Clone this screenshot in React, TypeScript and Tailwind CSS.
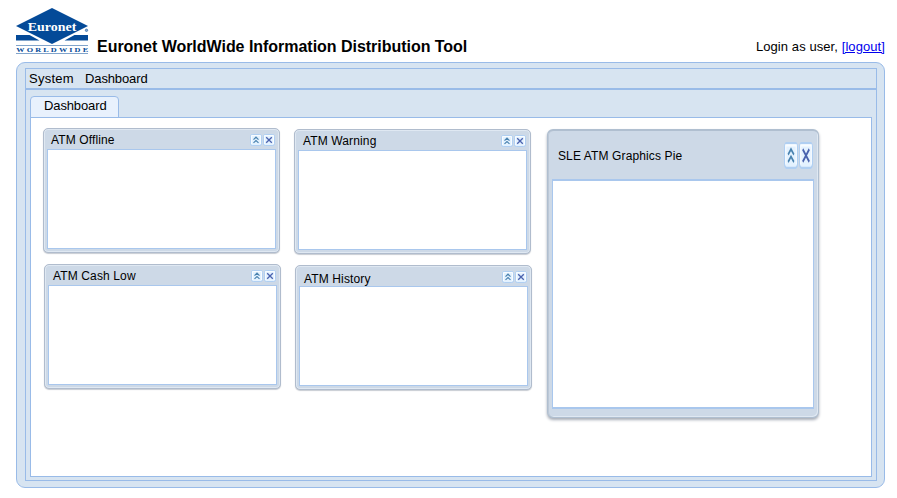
import React from "react";

function Logo() {
  return (
    <svg width="74" height="48" viewBox="0 0 74 48" className="block shrink-0">
      <g fill="#044a98">
        <path d="M0 27H13.500L23.500 32.500H0ZM72 27H58.500L48.500 32.500H72Z" />
        <path d="M36 0L72 18L36 36L0 18Z" />
        <path d="M0 37h72v.9H0Z" opacity=".5" />
        <path d="M0 45h72v.9H0Z" opacity=".5" />
      </g>
      <text x="11.800" y="22.800" fill="#fff" fontFamily="Liberation Serif, serif" fontSize="13.500" fontWeight="bold" textLength="48.500" lengthAdjust="spacingAndGlyphs">Euronet</text>
      <text x="0.300" y="43.900" fill="#044a98" fontFamily="Liberation Serif, serif" fontSize="6.500" fontWeight="bold" letterSpacing="1.700" textLength="74" lengthAdjust="spacingAndGlyphs">WORLDWIDE</text>
      <circle cx="70.500" cy="22.300" r="1.200" fill="#8aabd0" stroke="#3f73ae" strokeWidth=".8" />
    </svg>
  );
}

function Tool({ close = false, large = false }: { close?: boolean; large?: boolean }) {
  return (
    <svg
      width={large ? 14 : 12}
      height={large ? 27 : 12}
      viewBox="0 0 12 12"
      preserveAspectRatio="none"
      className="block shrink-0"
    >
      <rect x=".5" y=".5" width="11" height="11" rx="1.700" fill="#e4f2ff" stroke="#b0cff2" />
      <path d="M1.500 10V1.500H10.500V10" fill="none" stroke="#f8fcff" />
      {close ? (
        <path d="M3.200 3.200L8.800 8.800M8.800 3.200L3.200 8.800" fill="none" stroke="#4a62ae" strokeWidth="1.300" />
      ) : (
        <path d="M3.500 5.600L6 3.200L8.500 5.600M3.500 8.900L6 6.500L8.500 8.900" fill="none" stroke="#4a83b0" strokeWidth="1.200" />
      )}
    </svg>
  );
}

function Portlet({ title, className = "", textClass = "" }: { title: string; className?: string; textClass?: string }) {
  return (
    <section className={`flex h-[125px] w-[237px] flex-col rounded-[5px] border border-[#b0bccd] bg-[#cdd9e7] px-[3px] pb-[3px] shadow-[inset_0_0_0_1px_#dfe8f2,0_1px_1px_#c8ccd3] ${className}`}>
      <header className="flex h-5 shrink-0 items-start justify-between pl-1 pr-px pt-1">
        <h2 className={`whitespace-nowrap text-[12px] leading-[14px] tracking-[0.13px] ${textClass}`}>{title}</h2>
        <div className="mt-px flex gap-px"><Tool /><Tool close /></div>
      </header>
      <div className="grow border border-[#a9c7ed] bg-white" />
    </section>
  );
}

export default function App() {
  return (
    <div className="flex h-[498px] w-[897px] flex-col overflow-hidden bg-white pl-4 pr-3 font-['Liberation_Sans',Arial,sans-serif] text-black">
      <header className="flex h-[62px] shrink-0 items-start pt-2">
        <Logo />
        <h1 className="ml-[7px] mt-[30px] whitespace-nowrap text-[16px] font-bold leading-[18px] tracking-[-0.03px]">Euronet WorldWide Information Distribution Tool</h1>
        <div className="ml-auto mt-[31px] whitespace-nowrap text-[13px] leading-[15px] tracking-[0.08px]">
          Login as user, <a href="#" className="text-[#0000ee] underline">[logout]</a>
        </div>
      </header>
      <main className="h-[426px] w-[869px] shrink-0 rounded-[9px] border border-[#99bbe8] bg-[#d7e4f1] pl-2 pt-[5px]">
        <div className="flex h-[413px] w-[852px] flex-col border border-[#99bbe8]">
          <nav className="flex h-[21px] shrink-0 gap-[11px] border-b-2 border-[#99bbe8] pl-[3px] pt-[2px] text-[13px] leading-[15px]">
            <span className="w-[45px] tracking-[0.25px]">System</span><span className="tracking-[-0.12px]">Dashboard</span>
          </nav>
          <div className="flex h-7 shrink-0 items-end pl-1">
            <div className="h-[22px] w-[89px] rounded-t-[4px] border border-b-[#99bbe8] border-[#99bbe8] bg-[#e8f1fd] pl-[13px] pt-px text-[13px] leading-[15px] tracking-[-0.12px]">Dashboard</div>
          </div>
          <div className="-mt-px ml-1 flex h-[360px] w-[842px] shrink-0 border border-[#99bbe8] bg-white pl-3 pt-[10px]">
            <div className="flex w-[237px] flex-col gap-[11px]">
              <Portlet title="ATM Offline" />
              <Portlet title="ATM Cash Low" className="ml-px" textClass="pl-px" />
            </div>
            <div className="ml-[14px] mt-px flex w-[237px] flex-col gap-[11px]">
              <Portlet title="ATM Warning" textClass="pl-px" />
              <Portlet title="ATM History" className="ml-px" textClass="pl-px pt-[2px]" />
            </div>
            <section className="ml-4 mt-px flex h-[289px] w-[272px] flex-col rounded-[6px] border border-t-2 border-[#b0bfd0] bg-[#cdd9e7] px-[4px] pb-2 shadow-[inset_1px_0_0_#bdc8d6,inset_-1px_-1px_0_#dfe8f2,0_2px_3px_#a7adb7]">
              <header className="flex h-12 shrink-0 items-start justify-between pl-[6px] pr-0 pt-3">
                <h2 className="mt-[6px] whitespace-nowrap text-[12px] leading-[14px] tracking-[0.12px]">SLE ATM Graphics Pie</h2>
                <div className="-mt-px mr-px flex gap-px"><Tool large /><Tool close large /></div>
              </header>
              <div className="grow border border-t-2 border-b-2 border-[#a9c7ed] bg-white" />
            </section>
          </div>
        </div>
      </main>
    </div>
  );
}
